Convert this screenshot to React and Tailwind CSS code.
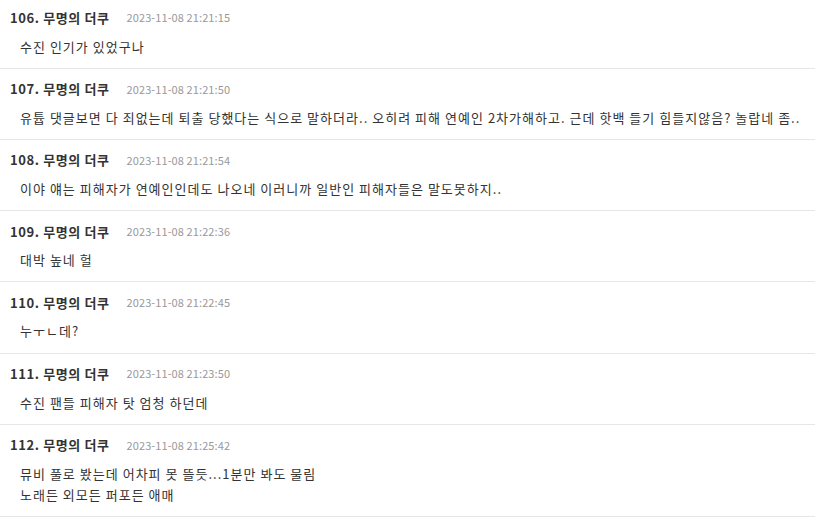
import React from "react";

const rows = [
  { n: 106, t: "2023-11-08 21:21:15", c: ["수진 인기가 있었구나"] },
  { n: 107, t: "2023-11-08 21:21:50", c: ["유튭 댓글보면 다 죄없는데 퇴출 당했다는 식으로 말하더라.. 오히려 피해 연예인 2차가해하고. 근데 핫백 들기 힘들지않음? 놀랍네 좀.."] },
  { n: 108, t: "2023-11-08 21:21:54", c: ["이야 얘는 피해자가 연예인인데도 나오네 이러니까 일반인 피해자들은 말도못하지.."] },
  { n: 109, t: "2023-11-08 21:22:36", c: ["대박 높네 헐"] },
  { n: 110, t: "2023-11-08 21:22:45", c: ["누ㅜㄴ데?"] },
  { n: 111, t: "2023-11-08 21:23:50", c: ["수진 팬들 피해자 탓 엄청 하던데"] },
  { n: 112, t: "2023-11-08 21:25:42", c: ["뮤비 풀로 봤는데 어차피 못 뜰듯...1분만 봐도 물림", "노래든 외모든 퍼포든 애매"] },
];

export default function App() {
  return (
    <div
      className="w-[815px] h-[519px] overflow-hidden bg-white text-[#333]"
      style={{ fontFamily: '"Malgun Gothic", "Noto Sans CJK KR", "Noto Sans", sans-serif' }}
    >
      <div className="-mt-[2.3px]">
        {rows.map((r) => (
          <div key={r.n} className="border-b border-[#e6e6e6] pt-3 pb-[11.2px]">
            <div className="flex items-center h-4 pl-[10px]">
              <span className="text-[13px] font-bold text-[#333] tracking-[0.6px]">{r.n}. 무명의 더쿠</span>
              <span className="ml-[17px] text-[11px] text-[#999] tracking-[0.1px]">{r.t}</span>
            </div>
            <div className="mt-[10px] pl-5 text-[13px] leading-[21px] text-[#333] whitespace-nowrap tracking-[1.02px]">
              {r.c.map((l, i) => (
                <div key={i}>{l}</div>
              ))}
            </div>
          </div>
        ))}
      </div>
    </div>
  );
}
